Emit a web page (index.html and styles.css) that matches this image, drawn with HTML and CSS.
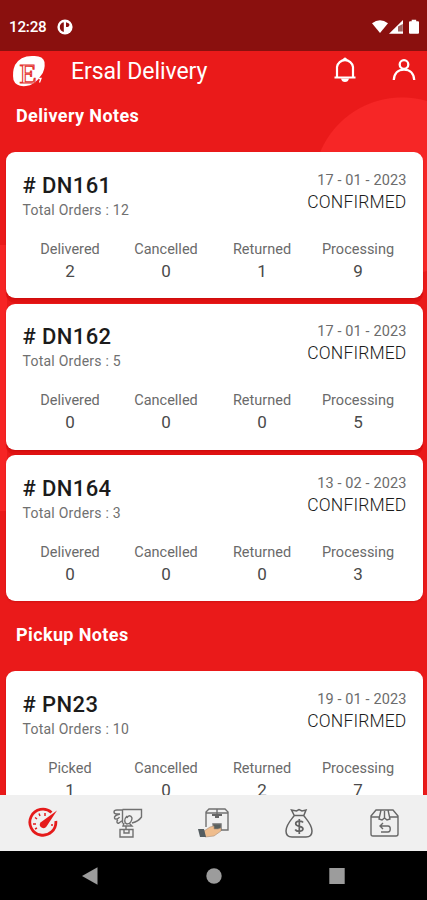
FILE: index.html
```html
<!DOCTYPE html>
<html lang="en">
<head>
<meta charset="utf-8">
<title>Ersal Delivery</title>
<link rel="stylesheet" href="styles.css">
</head>
<body>
<div class="phone">
  <div class="status">
    <span class="time">12:28</span>
    <svg class="app-dot" width="16" height="16" viewBox="0 0 16 16"><circle cx="8" cy="8" r="7.600" fill="#fff"/><path d="M6.800 3.200A5 5 0 0 0 6.800 13zM9 3.300v4.600h1.600a2.100 2.100 0 0 0 1.300-3.500z" fill="#8a100e"/></svg>
    <svg class="signals" width="50" height="16" viewBox="0 0 50 16"><path d="M1 4.300Q9 -1.600 17 4.300L9 14z" fill="#fff"/><path d="M18 14.800 32 1v13.800z" fill="#fff"/><path d="M27 7.500 31.800 5v7.500H27z" fill="#a06360"/><path d="M38 3.200q0-1 1-1h1.700V.8h4.500v1.400H47q1 0 1 1v10.600q0 1-1 1h-8q-1 0-1-1z" fill="#fff"/></svg>
  </div>
  <div class="app">
    <header class="bar">
      <svg class="logo" width="34" height="34" viewBox="0 0 34 34"><path d="M3 11Q8 2 20 2 31 1 32.500 8q1 8-3.500 13.500Q22 32 14 32 4 33 1.500 26 0 18 3 11z" fill="#fff"/><text class="mark" x="7.500" y="29">E</text><path d="M26.500 24.500h2.500l-1.500 4" fill="none" stroke="#fff" stroke-width="1.300"/></svg>
      <h1 class="title">Ersal Delivery</h1>
      <svg class="bell" width="24" height="28" viewBox="0 0 24 28" fill="none" stroke="#fff" stroke-width="2.200"><path d="M4 20.500V10C4.500 6 8 3.200 12 3.200s7.500 2.800 8 6.800v10.500M1.500 20.500h21"/><path d="M8.500 4Q10.500 .5 12 .5T15.500 4zM8 21.500h8q-.8 3.500-4 3.500t-4-3.500z" fill="#fff" stroke="none"/></svg>
      <svg class="user" width="24" height="24" viewBox="0 0 24 24" fill="none" stroke="#fff" stroke-width="2.300"><circle cx="12" cy="5.500" r="4.300"/><path d="M1.800 21C2.200 14.500 6 10.700 12 10.700s9.800 3.800 10.200 10.300"/></svg>
    </header>
    <main class="content">
      <h2 class="section">Delivery Notes</h2>
      <article class="card">
        <div class="head"><div><h3 class="id"># DN161</h3><p class="total">Total Orders : 12</p></div><div class="side"><p class="date">17 - 01 - 2023</p><p class="state">CONFIRMED</p></div></div>
        <dl class="stats"><div><dt>Delivered</dt><dd>2</dd></div><div><dt>Cancelled</dt><dd>0</dd></div><div><dt>Returned</dt><dd>1</dd></div><div><dt>Processing</dt><dd>9</dd></div></dl>
      </article>
      <article class="card">
        <div class="head"><div><h3 class="id"># DN162</h3><p class="total">Total Orders : 5</p></div><div class="side"><p class="date">17 - 01 - 2023</p><p class="state">CONFIRMED</p></div></div>
        <dl class="stats"><div><dt>Delivered</dt><dd>0</dd></div><div><dt>Cancelled</dt><dd>0</dd></div><div><dt>Returned</dt><dd>0</dd></div><div><dt>Processing</dt><dd>5</dd></div></dl>
      </article>
      <article class="card">
        <div class="head"><div><h3 class="id"># DN164</h3><p class="total">Total Orders : 3</p></div><div class="side"><p class="date">13 - 02 - 2023</p><p class="state">CONFIRMED</p></div></div>
        <dl class="stats"><div><dt>Delivered</dt><dd>0</dd></div><div><dt>Cancelled</dt><dd>0</dd></div><div><dt>Returned</dt><dd>0</dd></div><div><dt>Processing</dt><dd>3</dd></div></dl>
      </article>
      <h2 class="section pickup">Pickup Notes</h2>
      <article class="card">
        <div class="head"><div><h3 class="id"># PN23</h3><p class="total">Total Orders : 10</p></div><div class="side"><p class="date">19 - 01 - 2023</p><p class="state">CONFIRMED</p></div></div>
        <dl class="stats"><div><dt>Picked</dt><dd>1</dd></div><div><dt>Cancelled</dt><dd>0</dd></div><div><dt>Returned</dt><dd>2</dd></div><div><dt>Processing</dt><dd>7</dd></div></dl>
      </article>
    </main>
  </div>
  <nav class="tabs">
    <svg width="32" height="32" viewBox="0 0 32 32" fill="none" stroke="#e51b1b"><path d="M24.500 5.500A13 13 0 1 0 28.800 14" stroke-width="2.800"/><path d="M6 17h3M8 10.500l2 1.500M12 6.500l1 2.500M18 6v3M24 18h2M8 22l2-1" stroke-width="1.500"/><path d="M13.500 15.500 30 3.500 19.500 19.500a3.500 3.500 0 1 1-6-4z" fill="#e51b1b" stroke="none"/></svg>
    <svg width="32" height="32" viewBox="0 0 32 32" fill="none" stroke="#707070" stroke-width="1.400"><path d="M10.500 2.500h19V10c-2 3-4 4.500-9.500 6M10.500 2.500v14M10.500 3H5C1 3 1 7 5 7h3M8 7C4 8 2 9 2.500 11s4 1 5-1M6 13c-2 1-1 4 1 3l4-3M15 9c-3 3-3 7 0 8 3 0 5-3 5-6-1-3-4-3-5 0M12 16l-1 3h9l-3-3M14 19v4M8 22.500h13v7.500H8zM12 22v4h5v-4"/></svg>
    <svg width="32" height="32" viewBox="0 0 32 32" fill="none" stroke="#707070" stroke-width="1.400"><path d="M9 20V5l3-3h16l3 3v18H20M9 6h22M20 2v6"/><path d="M15 7h10v2h-3v2h-4V9h-3z" fill="#666" stroke="none"/><path d="M16 17h8v6h-7z" fill="#59605e"/><path d="m7 24 6-4 4-1v3h4l3-1v3l-7 5-9 1z" fill="#efbd8d" stroke="#a98d77" stroke-width=".6"/><path d="M1 22h6l2 8H3z" fill="#555d60" stroke="none"/></svg>
    <svg width="32" height="32" viewBox="0 0 32 32" fill="none" stroke="#636363" stroke-width="1.500"><path d="m11 8-2.500-5 5 1L16 2.500 19 4l4-1-2 5M10.500 8.500h11M11 9C7 14 3 18 3 24c0 4 2.500 6 6 6h14c3.500 0 6-2 6-6 0-6-4-10-8-15"/><path d="M20 15.500c-1-2-7-2-7.300 1-.2 4 7.300 1.700 7.300 5.500-.3 3-6.500 3-7.800.5M16.300 12v15" stroke-width="1.700"/></svg>
    <svg width="32" height="32" viewBox="0 0 32 32" fill="none" stroke="#686868" stroke-width="1.400"><path d="m3 9 5-6h17l5 6v18q0 2-2 2H5q-2 0-2-2zM3 10h9M21 10h9M13 3l-2 9 3 1 2.500-2 2.500 2 3-1-2-9M16.500 4v7M15 16l-3 3 3 3M12.500 19H20c3 0 3 6 0 6h-7"/></svg>
  </nav>
  <div class="system">
    <svg width="18" height="20" viewBox="0 0 18 20"><path d="M0 10 15.500 1.300v17.400z" fill="#9c9c9c"/></svg>
    <svg width="18" height="20" viewBox="0 0 18 20"><circle cx="9" cy="10" r="7.700" fill="#9c9c9c"/></svg>
    <svg width="18" height="20" viewBox="0 0 18 20"><path d="M1.300 2h15.400v16H1.300z" fill="#9c9c9c"/></svg>
  </div>
</div>
</body>
</html>
```
FILE: styles.css
```css
* { box-sizing: border-box; margin: 0; padding: 0; }
body { font-family: Roboto, "Liberation Sans", sans-serif; overflow: hidden; }
svg { display: block; flex: none; }
.phone { width: 427px; height: 900px; display: flex; flex-direction: column; overflow: hidden; }
.status { height: 51px; flex: none; background: #8a100e; display: flex; align-items: center; padding: 2px 6px 0 9px; color: #fff; }
.time { font-size: 15.2px; font-weight: 500; letter-spacing: -.2px; width: 48px; }
.signals { margin-left: auto; width: 50px; }
.app { flex: 1; min-height: 0; overflow: hidden; background: radial-gradient(circle at 402px 135px, #f62626 0 88px, transparent 89px), linear-gradient(#f62424, #f62424) 0 194px / 7px 266px no-repeat, #ea1a1a; }
.bar { height: 40px; display: flex; align-items: center; padding: 0 11px 0 12px; color: #fff; }
.mark { font: 28px "Liberation Serif", serif; fill: #fff; stroke: #e4322e; stroke-width: 1.1px; }
.title { font-size: 23px; font-weight: 400; margin-left: 25px; white-space: nowrap; letter-spacing: -.05px; }
.bell { margin-left: auto; margin-right: 35px; }
.section { color: #fff; font-size: 18px; font-weight: 700; line-height: 22px; letter-spacing: .38px; padding: 14px 16px 25.3px; }
.pickup { padding-top: 17px; padding-bottom: 25.5px; }
.card { height: 146px; margin: 0 4.5px 5.5px 5.5px; border-radius: 9px; background: #fff; padding: 19.7px 16px 0 17px; box-shadow: 0 1px 2px rgba(160, 0, 0, .35), 0 5px 0 #e01212; }
.card:has(+ .section), .card:last-child { box-shadow: 0 1px 2px rgba(160, 0, 0, .35); }
.head { display: flex; justify-content: space-between; color: #1b1b1b; }
.id { font-size: 22px; font-weight: 500; line-height: 28px; letter-spacing: .4px; }
.total { font-size: 14px; line-height: 21px; color: #707070; letter-spacing: .25px; }
.side { text-align: right; }
.date { font-size: 14.5px; line-height: 17px; color: #6c6c6c; letter-spacing: .12px; }
.state { font-size: 17.5px; line-height: 26px; font-weight: 300; letter-spacing: .15px; }
.stats { display: grid; grid-template-columns: repeat(4, 96px); text-align: center; margin: 19px 0 0 -.5px; }
.stats dt { font-size: 14.5px; line-height: 20px; color: #6a6a6a; }
.stats dd { font-size: 17px; line-height: 22px; color: #4a4a4a; }
.tabs { height: 56px; flex: none; background: #f0f0f0; display: grid; grid-template-columns: repeat(5, 1fr); place-items: center; }
.system { height: 49px; flex: none; background: #000; display: flex; align-items: center; justify-content: center; gap: 105px; }
```
